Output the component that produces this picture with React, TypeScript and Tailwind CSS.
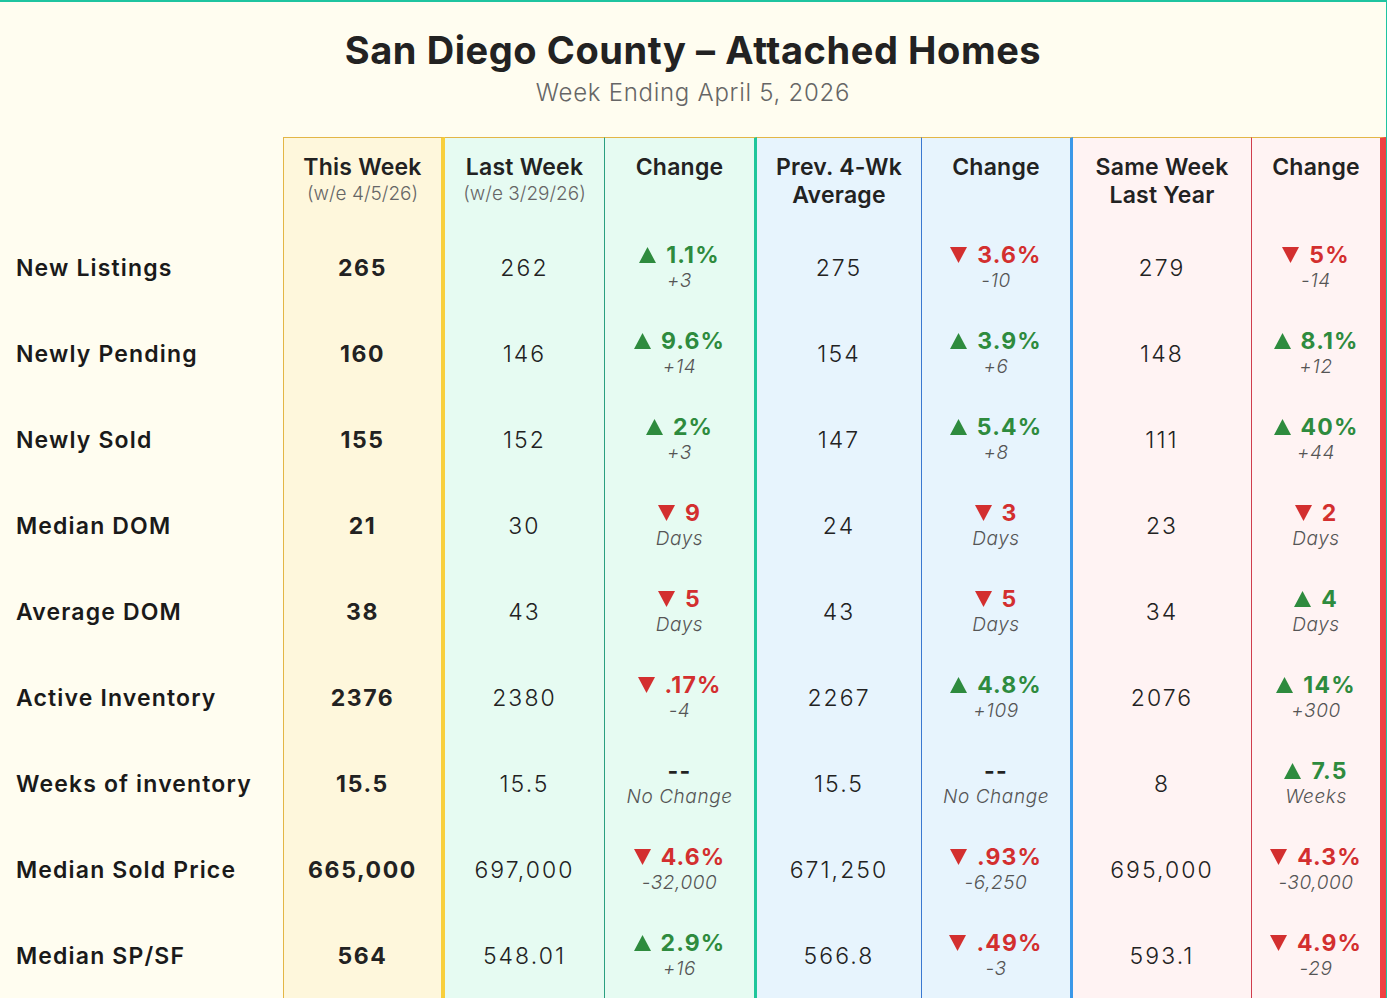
import React from 'react';

type Dir = 'up' | 'down' | 'none';
type Chg = { dir: Dir; v: string; s: string };
type Row = { label: string; tw: string; lw: string; c1: Chg; p4: string; c2: Chg; ly: string; c3: Chg };

const up = (v: string, s: string): Chg => ({ dir: 'up', v, s });
const down = (v: string, s: string): Chg => ({ dir: 'down', v, s });
const none: Chg = { dir: 'none', v: '--', s: 'No Change' };

const rows: Row[] = [
  { label: 'New Listings', tw: '265', lw: '262', c1: up('1.1%', '+3'), p4: '275', c2: down('3.6%', '-10'), ly: '279', c3: down('5%', '-14') },
  { label: 'Newly Pending', tw: '160', lw: '146', c1: up('9.6%', '+14'), p4: '154', c2: up('3.9%', '+6'), ly: '148', c3: up('8.1%', '+12') },
  { label: 'Newly Sold', tw: '155', lw: '152', c1: up('2%', '+3'), p4: '147', c2: up('5.4%', '+8'), ly: '111', c3: up('40%', '+44') },
  { label: 'Median DOM', tw: '21', lw: '30', c1: down('9', 'Days'), p4: '24', c2: down('3', 'Days'), ly: '23', c3: down('2', 'Days') },
  { label: 'Average DOM', tw: '38', lw: '43', c1: down('5', 'Days'), p4: '43', c2: down('5', 'Days'), ly: '34', c3: up('4', 'Days') },
  { label: 'Active Inventory', tw: '2376', lw: '2380', c1: down('.17%', '-4'), p4: '2267', c2: up('4.8%', '+109'), ly: '2076', c3: up('14%', '+300') },
  { label: 'Weeks of inventory', tw: '15.5', lw: '15.5', c1: none, p4: '15.5', c2: none, ly: '8', c3: up('7.5', 'Weeks') },
  { label: 'Median Sold Price', tw: '665,000', lw: '697,000', c1: down('4.6%', '-32,000'), p4: '671,250', c2: down('.93%', '-6,250'), ly: '695,000', c3: down('4.3%', '-30,000') },
  { label: 'Median SP/SF', tw: '564', lw: '548.01', c1: up('2.9%', '+16'), p4: '566.8', c2: down('.49%', '-3'), ly: '593.1', c3: down('4.9%', '-29') },
];

// column skins: background + right borders
const col = [
  '',
  'bg-[#fef7dc] border-l border-l-[#e3b646] border-r-4 border-r-[#f8cf3c]',
  'bg-[#e6fbf2] border-r border-r-[#2a9f80]',
  'bg-[#e6fbf2] border-r-[3px] border-r-[#1fc69b]',
  'bg-[#e7f4fd] border-r border-r-[#3a78d0]',
  'bg-[#e7f4fd] border-r-[3px] border-r-[#3b98e8]',
  'bg-[#fff3f3] border-r border-r-[#d03c4c]',
  'bg-[#fff3f3] border-r-[6px] border-r-[#ef4242]',
];

const Triangle: React.FC<{ dir: 'up' | 'down' }> = ({ dir }) => (
  <svg width="17" height="16" viewBox="0 0 17 16" className="inline-block mr-[10px] -mt-[3px]">
    {dir === 'up' ? (
      <polygon points="8.5,0 17,16 0,16" fill="#2e8b3e" />
    ) : (
      <polygon points="0,0 17,0 8.5,16" fill="#d32f2f" />
    )}
  </svg>
);

const ChangeCell: React.FC<{ c: Chg }> = ({ c }) => (
  <div className="flex flex-col items-center justify-center h-full -mt-[1px]">
    <div
      className={`text-[23px] leading-[26px] font-bold tracking-[0.05em] ${
        c.dir === 'up' ? 'text-[#2e8b3e]' : c.dir === 'down' ? 'text-[#d32f2f]' : 'text-[#222]'
      }`}
    >
      {c.dir !== 'none' && <Triangle dir={c.dir} />}
      {c.v}
    </div>
    <div className="text-[19px] leading-[25px] italic font-light text-[#555] tracking-[0.03em]">{c.s}</div>
  </div>
);

const Header: React.FC<{ a: string; b?: string; sub?: string }> = ({ a, b, sub }) => (
  <div className="flex flex-col items-center pt-[15px] text-center">
    <div className="text-[23px] leading-[28px] font-semibold text-[#222] tracking-[0.01em]">{a}</div>
    {b && <div className="text-[23px] leading-[28px] font-semibold text-[#222] tracking-[0.01em]">{b}</div>}
    {sub && <div className="text-[19px] leading-[24px] font-light text-[#666] mt-[1px]">{sub}</div>}
  </div>
);

export default function App() {
  return (
    <div className="min-h-screen bg-[#fffdf0] border-t-2 border-t-[#1fc4a0] border-r border-r-[#1fc4a0] font-['Inter','Open_Sans',sans-serif] text-[#1f1f1f]">
      <div className="pt-[26px] pb-[29px] text-center">
        <h1 className="text-[38px] leading-[44px] font-bold text-[#222] tracking-[0.015em]">San Diego County – Attached Homes</h1>
        <p className="text-[24px] leading-[30px] font-light text-[#666] mt-[6px] tracking-[0.03em]">Week Ending April 5, 2026</p>
      </div>

      <div className="grid grid-cols-[283px_162px_160px_152px_165px_151px_179px_134px] grid-rows-[88px_repeat(9,86px)]">
        <div />
        <div className={`${col[1]} border-t border-t-[#e3b646]`}>
          <Header a="This Week" sub="(w/e 4/5/26)" />
        </div>
        <div className={`${col[2]} border-t border-t-[#e3b646]`}>
          <Header a="Last Week" sub="(w/e 3/29/26)" />
        </div>
        <div className={`${col[3]} border-t border-t-[#e3b646]`}>
          <Header a="Change" />
        </div>
        <div className={`${col[4]} border-t border-t-[#e3b646]`}>
          <Header a="Prev. 4-Wk" b="Average" />
        </div>
        <div className={`${col[5]} border-t border-t-[#e3b646]`}>
          <Header a="Change" />
        </div>
        <div className={`${col[6]} border-t border-t-[#e3b646]`}>
          <Header a="Same Week" b="Last Year" />
        </div>
        <div className={`${col[7]} border-t border-t-[#e3b646]`}>
          <Header a="Change" />
        </div>

        {rows.map((r) => (
          <React.Fragment key={r.label}>
            <div className="flex items-center pl-4 text-[23px] font-semibold text-[#1a1a1a] tracking-[0.05em]">{r.label}</div>
            <div className={`${col[1]} flex items-center justify-center text-[23px] font-bold tracking-[0.07em] text-[#222]`}>{r.tw}</div>
            <div className={`${col[2]} flex items-center justify-center text-[23px] font-light tracking-[0.09em] text-[#222]`}>{r.lw}</div>
            <div className={col[3]}>
              <ChangeCell c={r.c1} />
            </div>
            <div className={`${col[4]} flex items-center justify-center text-[23px] font-light tracking-[0.09em] text-[#222]`}>{r.p4}</div>
            <div className={col[5]}>
              <ChangeCell c={r.c2} />
            </div>
            <div className={`${col[6]} flex items-center justify-center text-[23px] font-light tracking-[0.09em] text-[#222]`}>{r.ly}</div>
            <div className={col[7]}>
              <ChangeCell c={r.c3} />
            </div>
          </React.Fragment>
        ))}
      </div>
    </div>
  );
}
